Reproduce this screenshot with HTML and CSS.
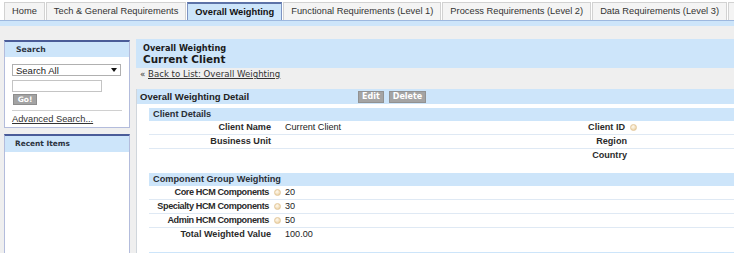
FILE: index.html
```html
<!DOCTYPE html>
<html>
<head>
<meta charset="utf-8">
<title>Overall Weighting ~ Current Client</title>
<link rel="stylesheet" href="styles.css">
</head>
<body>
<nav class="tabs">
  <div class="tab">Home</div>
  <div class="tab">Tech &amp; General Requirements</div>
  <div class="tab active">Overall Weighting</div>
  <div class="tab">Functional Requirements (Level 1)</div>
  <div class="tab">Process Requirements (Level 2)</div>
  <div class="tab">Data Requirements (Level 3)</div>
  <div class="tab">Reports</div>
</nav>
<div class="tabband"></div>
<div class="page">
  <aside class="sidebar">
    <section class="panel search">
      <div class="panel-head">Search</div>
      <div class="panel-body">
        <div class="select"><span>Search All</span><svg class="caret" width="6" height="4" viewBox="0 0 6 4"><path d="M0 0h6L3 4z" fill="#111"/></svg></div>
        <div class="input"></div>
        <div class="go">Go!</div>
        <div class="sep"></div>
        <a class="adv" href="#">Advanced Search...</a>
      </div>
    </section>
    <section class="panel recent">
      <div class="panel-head">Recent Items</div>
      <div class="panel-body"></div>
    </section>
  </aside>
  <main class="main">
    <div class="ptitle">
      <div class="pt-type">Overall Weighting</div>
      <div class="pt-name">Current Client</div>
    </div>
    <div class="back">« <a href="#">Back to List: Overall Weighting</a></div>
    <div class="detail">
      <div class="dhead">
        <div class="dtitle">Overall Weighting Detail</div>
        <div class="btns"><span class="btn">Edit</span><span class="btn">Delete</span></div>
      </div>
      <div class="dbody">
        <div class="sub">Client Details</div>
        <div class="grid">
          <div class="lbl">Client Name</div><div class="val">Current Client</div><div class="lbl">Client ID<i class="orb"></i></div><div class="val"></div>
          <div class="lbl">Business Unit</div><div class="val"></div><div class="lbl">Region</div><div class="val"></div>
          <div class="lbl last"></div><div class="val last"></div><div class="lbl last">Country</div><div class="val last"></div>
        </div>
        <div class="sub gapped">Component Group Weighting</div>
        <div class="grid">
          <div class="lbl cmp">Core HCM Components<i class="orb"></i></div><div class="val">20</div><div class="lbl"></div><div class="val"></div>
          <div class="lbl cmp">Specialty HCM Components<i class="orb"></i></div><div class="val">30</div><div class="lbl"></div><div class="val"></div>
          <div class="lbl cmp">Admin HCM Components<i class="orb"></i></div><div class="val">50</div><div class="lbl"></div><div class="val"></div>
          <div class="lbl last">Total Weighted Value</div><div class="val last">100.00</div><div class="lbl last"></div><div class="val last"></div>
        </div>
        <div class="sub gapped"></div>
      </div>
    </div>
  </main>
</div>
</body>
</html>
```
FILE: styles.css
```css
html, body { margin: 0; padding: 0; }
body {
  font-family: "Liberation Sans", Arial, sans-serif;
  color: #222;
  background: #efefef;
  width: 734px;
  height: 253px;
  overflow: hidden;
}

/* tabs */
.tabs {
  display: flex;
  align-items: flex-end;
  gap: 1px;
  height: 19px;
  padding: 1px 0 0 4px;
  background: #fff;
  border-bottom: 1px solid #9db8df;
  white-space: nowrap;
  overflow: hidden;
}
.tab {
  flex: none;
  height: 18px;
  box-sizing: border-box;
  padding: 0 7px;
  font-size: 9.3px;
  line-height: 17px;
  color: #333;
  background: #f4f4f4;
  border: 1px solid #d2d2d2;
  border-bottom: none;
}
.tab.active {
  height: 19px;
  margin-bottom: -1px;
  position: relative;
  font-weight: bold;
  color: #111;
  background: #cde5fa;
  border-color: #7d93c2;
  border-top: 2px solid #5d73a8;
  line-height: 17px;
}
.tabband { height: 5px; background: #cde5fa; }

/* page */
.page {
  display: flex;
  gap: 6px;
  padding: 0 0 0 4px;
}
.sidebar {
  width: 126px;
  flex: none;
  margin-top: 14px;
}
.panel {
  background: #fff;
  border: 1px solid #b3bcdc;
  border-top: 2px solid #4a5c98;
}
.panel-head {
  background: #cde5fa;
  font-family: "DejaVu Sans", Verdana, sans-serif;
  font-weight: bold;
  font-size: 7.7px;
  color: #2b3340;
  height: 15px;
  line-height: 15px;
  padding-left: 11px;
}
.recent { margin-top: 6px; height: 140px; }
.recent .panel-head { height: 16px; line-height: 16px; font-size: 7.4px; padding-left: 10px; }
.search .panel-body { padding: 7px 6px 3px 7px; height: 60px; }
.select {
  display: flex;
  align-items: center;
  justify-content: space-between;
  width: 109px;
  height: 12px;
  box-sizing: border-box;
  border: 1px solid #b0b0b0;
  padding: 0 3px;
  font-size: 9.5px;
  color: #222;
}
.caret { display: block; }
.input {
  margin-top: 4px;
  width: 90px;
  height: 12px;
  box-sizing: border-box;
  border: 1px solid #c4c4c4;
}
.go {
  margin-top: 2px;
  margin-left: 1px;
  width: 24px;
  height: 11px;
  box-sizing: border-box;
  background: #a3a3a3;
  border: 1px solid #8d8d8d;
  color: #fff;
  font-family: "DejaVu Sans", Verdana, sans-serif;
  font-weight: bold;
  font-size: 7.5px;
  line-height: 9px;
  text-align: center;
}
.sep { margin-top: 5px; width: 110px; border-top: 1px solid #d0d0d0; }
.adv {
  display: block;
  margin-top: 3px;
  font-size: 9.3px;
  line-height: 11px;
  color: #333;
  text-decoration: underline;
}

/* main */
.main { flex: 1; margin-top: 13px; }
.ptitle {
  height: 29px;
  box-sizing: border-box;
  background: #cde5fa;
  padding: 4px 0 0 7px;
  font-family: "DejaVu Sans", Verdana, sans-serif;
  font-weight: bold;
  color: #1a1a1a;
}
.pt-type { font-size: 8.2px; line-height: 10px; }
.pt-name { font-size: 10.4px; line-height: 13px; }
.back {
  margin: 1px 0 0 4px;
  height: 11px;
  font-family: "DejaVu Sans", Verdana, sans-serif;
  font-size: 8.6px;
  line-height: 11px;
  color: #333;
}
.back a { color: #333; text-decoration: underline; }
.detail {
  margin-top: 9px;
  background: #fff;
  border-left: 1px solid #d0d6dc;
}
.dhead {
  display: flex;
  align-items: center;
  height: 15px;
  background: #cde5fa;
}
.dtitle {
  width: 218px;
  padding-left: 3px;
  font-weight: bold;
  font-size: 9.5px;
  color: #222;
}
.btns { display: flex; gap: 5px; }
.btn {
  height: 12px;
  box-sizing: border-box;
  padding: 0 3px;
  background: #a4a4a4;
  border: 1px solid #929292;
  color: #fff;
  font-family: "DejaVu Sans", Verdana, sans-serif;
  font-weight: bold;
  font-size: 8px;
  line-height: 10px;
}
.dbody { padding: 4px 0 0 12px; }
.sub {
  height: 13px;
  background: #cde5fa;
  padding-left: 4px;
  font-weight: bold;
  font-size: 9.2px;
  line-height: 13px;
  color: #2a2f36;
}
.sub.gapped { margin-top: 10px; }
.grid {
  display: grid;
  grid-template-columns: 129px 227px 129px 1fr;
}
.lbl, .val {
  height: 13px;
  border-bottom: 1px solid #dfe9f4;
  font-size: 9.1px;
  line-height: 13px;
  color: #222;
  white-space: nowrap;
}
.lbl {
  text-align: right;
  padding-right: 7px;
  font-weight: bold;
  color: #2a2a2a;
}
.lbl.cmp { letter-spacing: -0.4px; }
.val { padding-left: 7px; }
.lbl.last, .val.last { border-bottom-color: transparent; }
.orb {
  display: inline-block;
  width: 7px;
  height: 7px;
  margin-left: 5px;
  margin-right: -10px;
  vertical-align: -0.5px;
  border-radius: 50%;
  box-sizing: border-box;
  border: 1px solid #e3c89c;
  background: radial-gradient(circle at 40% 35%, #fffaf0 0%, #f1ddb9 60%, #e0c08c 100%);
}
```
